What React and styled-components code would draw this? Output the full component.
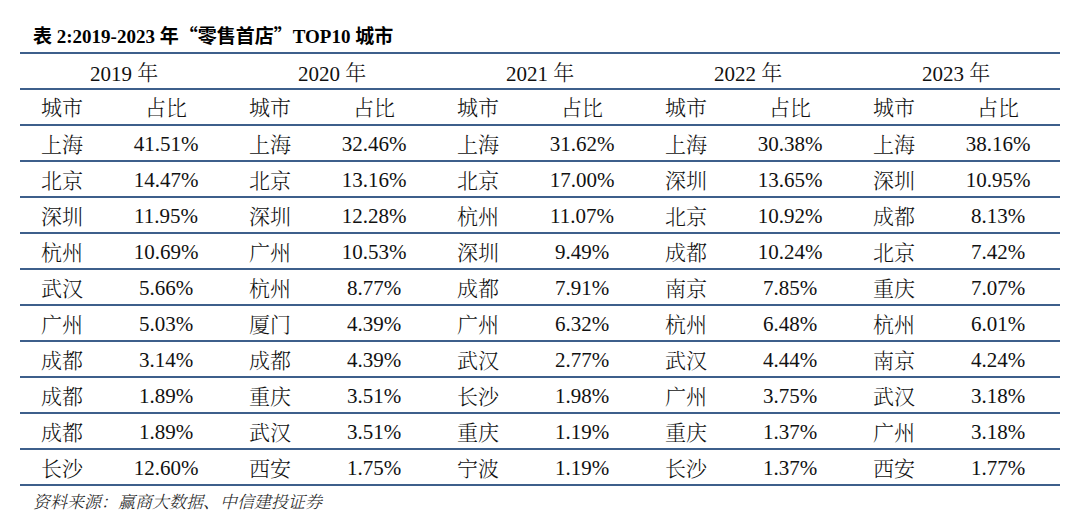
import React from "react";
import styled, { createGlobalStyle } from "styled-components";

const GlobalStyle = createGlobalStyle`
  html, body { margin: 0; padding: 0; background: #ffffff; }
  body { width: 1080px; height: 523px; overflow: hidden; }
`;

const LINE = "#3d5f8b";
const SERIF = `"Liberation Serif", "Noto Serif CJK SC", "Noto Sans CJK SC", serif`;
const CJK = `"Noto Serif CJK SC", "Noto Sans CJK SC", serif`;

const Page = styled.div`
  box-sizing: border-box;
  width: 1080px;
  height: 523px;
  padding: 23px 20px 0 20px;
  display: flex;
  flex-direction: column;
  font-family: ${SERIF};
  color: #111;
`;

const Title = styled.h1`
  margin: 0 0 6px 13px;
  height: 23px;
  line-height: 23px;
  font-size: 19px;
  font-weight: 700;
  color: #000;
  font-family: "Liberation Serif", "Noto Sans CJK SC", serif;
`;

const Quote = styled.span`
  font-family: "Noto Sans CJK SC", sans-serif;
  font-weight: 700;
`;

const Table = styled.div`
  width: 1040px;
  border-bottom: 2px solid ${LINE};
`;

const Row = styled.div`
  display: grid;
  grid-template-columns: ${(p) => (p.$groups ? "repeat(5, 208px)" : "repeat(5, 84px 124px)")};
  height: 36px;
  box-sizing: border-box;
  border-top: 2px solid ${LINE};
  align-items: center;
`;

const Cell = styled.div`
  text-align: center;
  font-size: 21px;
  line-height: 34px;
  font-weight: ${(p) => (p.$cjk ? 300 : 400)};
  font-family: ${(p) => (p.$cjk ? CJK : SERIF)};
  white-space: nowrap;
  padding-top: 1px;
  margin-top: ${(p) => (p.$cjk ? "-3px" : "0")};
`;

const Year = styled.span`
  font-family: "Liberation Serif", serif;
`;

const Nian = styled.span`
  font-family: ${CJK};
  font-weight: 300;
  position: relative;
  top: -1px;
`;

const Source = styled.p`
  margin: 4px 0 0 13px;
  font-size: 17px;
  line-height: 22px;
  font-style: italic;
  font-weight: 300;
  color: #222;
  font-family: ${CJK};
`;

const years = ["2019", "2020", "2021", "2022", "2023"];

const data = [
  [["上海", "41.51%"], ["上海", "32.46%"], ["上海", "31.62%"], ["上海", "30.38%"], ["上海", "38.16%"]],
  [["北京", "14.47%"], ["北京", "13.16%"], ["北京", "17.00%"], ["深圳", "13.65%"], ["深圳", "10.95%"]],
  [["深圳", "11.95%"], ["深圳", "12.28%"], ["杭州", "11.07%"], ["北京", "10.92%"], ["成都", "8.13%"]],
  [["杭州", "10.69%"], ["广州", "10.53%"], ["深圳", "9.49%"], ["成都", "10.24%"], ["北京", "7.42%"]],
  [["武汉", "5.66%"], ["杭州", "8.77%"], ["成都", "7.91%"], ["南京", "7.85%"], ["重庆", "7.07%"]],
  [["广州", "5.03%"], ["厦门", "4.39%"], ["广州", "6.32%"], ["杭州", "6.48%"], ["杭州", "6.01%"]],
  [["成都", "3.14%"], ["成都", "4.39%"], ["武汉", "2.77%"], ["武汉", "4.44%"], ["南京", "4.24%"]],
  [["成都", "1.89%"], ["重庆", "3.51%"], ["长沙", "1.98%"], ["广州", "3.75%"], ["武汉", "3.18%"]],
  [["成都", "1.89%"], ["武汉", "3.51%"], ["重庆", "1.19%"], ["重庆", "1.37%"], ["广州", "3.18%"]],
  [["长沙", "12.60%"], ["西安", "1.75%"], ["宁波", "1.19%"], ["长沙", "1.37%"], ["西安", "1.77%"]],
];

export default function App() {
  return (
    <>
      <GlobalStyle />
      <Page>
        <Title>
          表 2:2019-2023 年<Quote>“</Quote>零售首店<Quote>”</Quote>TOP10 城市
        </Title>
        <Table>
          <Row $groups>
            {years.map((y) => (
              <Cell key={y}>
                <Year>{y} </Year>
                <Nian>年</Nian>
              </Cell>
            ))}
          </Row>
          <Row>
            {years.map((y) => (
              <React.Fragment key={y}>
                <Cell $cjk>城市</Cell>
                <Cell $cjk>占比</Cell>
              </React.Fragment>
            ))}
          </Row>
          {data.map((row, i) => (
            <Row key={i}>
              {row.map(([city, pct], j) => (
                <React.Fragment key={j}>
                  <Cell $cjk>{city}</Cell>
                  <Cell>{pct}</Cell>
                </React.Fragment>
              ))}
            </Row>
          ))}
        </Table>
        <Source>资料来源：赢商大数据、中信建投证券</Source>
      </Page>
    </>
  );
}
